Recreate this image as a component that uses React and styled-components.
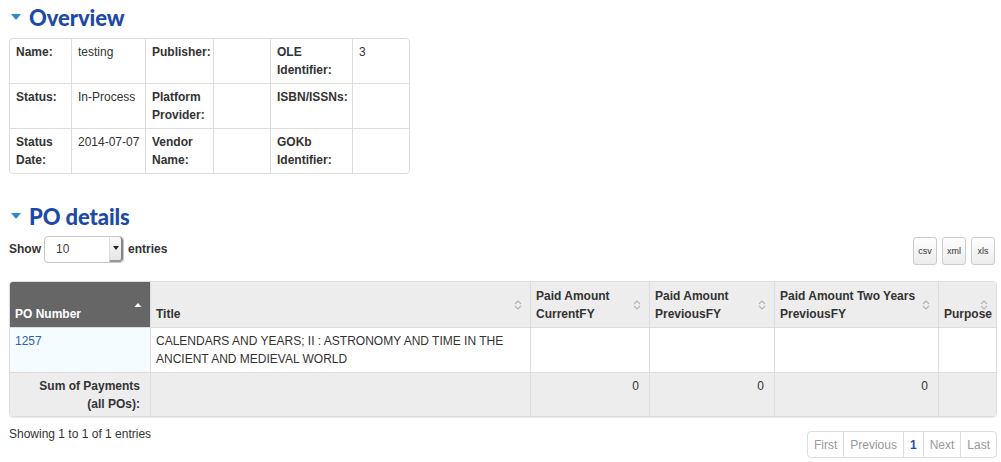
import React from 'react';
import styled, { createGlobalStyle } from 'styled-components';

const GlobalStyle = createGlobalStyle`
  body {
    margin: 0;
    background: #fff;
    font-family: "Liberation Sans", Arial, sans-serif;
    font-size: 12px;
    color: #333;
  }
`

const Page = styled.div`
  padding: 0 4px 0 9px;
`

const Heading = styled.h2`
  display: flex;
  align-items: center;
  gap: 8px;
  margin: ${props => props.$first ? '0' : '25px'} 0 0;
  height: 34px;
  font-family: Lato, "Open Sans", sans-serif;
  font-weight: 900;
  font-size: 22px;
  letter-spacing: -0.1px;
  color: #1d4aa8;
`

const Caret = styled.span`
  width: 0;
  height: 0;
  margin-left: 2px;
  border-left: 5px solid transparent;
  border-right: 5px solid transparent;
  border-top: 6px solid #2b8ad2;
`

const OverviewTable = styled.table`
  margin-top: 4px;
  width: 401px;
  border-collapse: separate;
  border-spacing: 0;
  border: 1px solid #ddd;
  border-radius: 4px;
  table-layout: fixed;

  td {
    height: 44px;
    box-sizing: border-box;
    padding: 4px 2px 4px 6px;
    vertical-align: top;
    line-height: 18px;
    border-left: 1px solid #ddd;
    border-top: 1px solid #ddd;
  }

  tr:first-child td {
    border-top: none;
  }

  td:first-child {
    border-left: none;
  }
`

const Label = styled.td`
  font-weight: bold;
`

const Toolbar = styled.div`
  display: flex;
  align-items: center;
  justify-content: space-between;
  margin-top: 4px;
  height: 28px;
`

const LengthControl = styled.label`
  display: flex;
  align-items: center;
  gap: 4px;
  font-weight: bold;
  margin-top: -4px;
`

const Select = styled.div`
  height: 25px;
  width: 67px;
  margin-left: -1px;
  border: 1px solid #c6c6c6;
  border-radius: 4px;
  display: flex;
  align-items: center;
  padding-left: 11px;
  font-weight: normal;
  color: #4a3a34;
  font-size: 12px;
  background: #fff;
`

const SelectArrow = styled.span`
  margin-left: auto;
  width: 14px;
  height: 25px;
  border-left: 1px solid #ddd;
  border-right: 2px solid #888;
  border-bottom: 2px solid #999;
  border-radius: 0 4px 4px 0;
  box-sizing: border-box;
  background: linear-gradient(#fafafa, #e6e6e6);
  display: flex;
  align-items: center;
  justify-content: center;

  &::after {
    content: '';
    border-left: 3px solid transparent;
    border-right: 3px solid transparent;
    border-top: 4px solid #222;
  }
`

const ExportButtons = styled.div`
  display: flex;
  gap: 5px;
  margin-right: 2px;
`

const ExportButton = styled.button`
  height: 28px;
  padding: 0 4px;
  min-width: 24px;
  font-family: "Liberation Sans", Arial, sans-serif;
  font-size: 9px;
  color: #333;
  border: 1px solid #ccc;
  border-radius: 3px;
  background: linear-gradient(#fff, #ececec);
`

const DataTable = styled.table`
  margin-top: 16px;
  width: 988px;
  border-collapse: separate;
  border-spacing: 0;
  border: 1px solid #ddd;
  border-radius: 4px;
  table-layout: fixed;
  box-shadow: 0 1px 1px rgba(0, 0, 0, 0.08);

  th, td {
    line-height: 18px;
    border-left: 1px solid #ddd;
    border-top: 1px solid #ddd;
  }

  tr:first-child th {
    border-top: none;
  }

  th:first-child, td:first-child {
    border-left: none;
  }
`

const HeadCell = styled.th`
  position: relative;
  padding: 5px 22px 4px 5px;
  text-align: left;
  vertical-align: bottom;
  font-weight: bold;
  background: ${props => props.$sorted ? '#666' : '#ededed'};
  color: ${props => props.$sorted ? '#fff' : '#333'};
  ${props => props.$sorted && 'border-top-left-radius: 3px;'}
  ${props => props.$tight && 'padding-right: 4px;'}
`

const SortIcon = styled.svg`
  position: absolute;
  right: 8px;
  top: 50%;
  margin-top: -5px;
`

const BodyCell = styled.td`
  padding: 4px 5px;
  vertical-align: top;
  background: ${props => props.$sorted ? '#f4fcff' : '#fff'};
`

const PoLink = styled.a`
  color: #2c63b8;
  text-decoration: none;
`

const SumCell = styled.td`
  padding: 4px 10px 3px 5px;
  vertical-align: top;
  text-align: right;
  background: #ededed;
  font-weight: ${props => props.$label ? 'bold' : 'normal'};
`

const TableFooter = styled.div`
  display: flex;
  justify-content: space-between;
  align-items: flex-start;
  margin-top: 8px;
`

const Info = styled.div`
  line-height: 18px;
`

const Pagination = styled.ul`
  display: flex;
  list-style: none;
  margin: 6px 0 0;
  padding: 0;
  border: 1px solid #ddd;
  border-radius: 4px;
  height: 25px;
`

const PageItem = styled.li`
  display: flex;
  align-items: center;
  padding: 0 6px;
  color: ${props => props.$current ? '#1d4fb0' : '#999'};
  font-weight: ${props => props.$current ? 'bold' : 'normal'};

  & + & {
    border-left: 1px solid #ddd;
  }
`

function SortArrows ({ color }) {
  return (
    <SortIcon width="8" height="10" viewBox="0 0 8 10">
      <path d="M1 4 L4 1 L7 4" fill="none" stroke={color} strokeWidth="1.1" />
      <path d="M1 6 L4 9 L7 6" fill="none" stroke={color} strokeWidth="1.1" />
    </SortIcon>
  )
}

function SortedUp () {
  return (
    <SortIcon width="8" height="10" viewBox="0 0 8 10">
      <path d="M0.5 7 L4 3 L7.5 7 Z" fill="#fff" />
    </SortIcon>
  )
}

const overview = [
  [['Name:', 'testing'], ['Publisher:', ''], ['OLE Identifier:', '3']],
  [['Status:', 'In-Process'], ['Platform Provider:', ''], ['ISBN/ISSNs:', '']],
  [['Status Date:', '2014-07-07'], ['Vendor Name:', ''], ['GOKb Identifier:', '']],
]

const columns = [
  { title: 'Title' },
  { title: <>Paid Amount<br />CurrentFY</> },
  { title: <>Paid Amount<br />PreviousFY</> },
  { title: <>Paid Amount Two Years<br />PreviousFY</> },
  { title: 'Purpose', tight: true },
]

export default function App () {
  return (
    <Page>
      <GlobalStyle />
      <Heading $first><Caret />Overview</Heading>
      <OverviewTable>
        <colgroup>
          <col style={{ width: 61 }} />
          <col style={{ width: 74 }} />
          <col style={{ width: 68 }} />
          <col style={{ width: 57 }} />
          <col style={{ width: 82 }} />
          <col style={{ width: 57 }} />
        </colgroup>
        <tbody>
          {overview.map((row, i) => (
            <tr key={i}>
              {row.map(([label, value]) => (
                <React.Fragment key={label}>
                  <Label>{label}</Label>
                  <td>{value}</td>
                </React.Fragment>
              ))}
            </tr>
          ))}
        </tbody>
      </OverviewTable>

      <Heading><Caret />PO details</Heading>
      <Toolbar>
        <LengthControl>
          Show
          <Select>10<SelectArrow /></Select>
          entries
        </LengthControl>
        <ExportButtons>
          <ExportButton>csv</ExportButton>
          <ExportButton>xml</ExportButton>
          <ExportButton>xls</ExportButton>
        </ExportButtons>
      </Toolbar>

      <DataTable>
        <colgroup>
          <col style={{ width: 140 }} />
          <col style={{ width: 380 }} />
          <col style={{ width: 119 }} />
          <col style={{ width: 125 }} />
          <col style={{ width: 164 }} />
          <col style={{ width: 58 }} />
        </colgroup>
        <thead>
          <tr>
            <HeadCell $sorted>PO Number<SortedUp /></HeadCell>
            {columns.map((col, i) => (
              <HeadCell key={i} $tight={col.tight}>
                {col.title}
                <SortArrows color="#b5b5b5" />
              </HeadCell>
            ))}
          </tr>
        </thead>
        <tbody>
          <tr>
            <BodyCell $sorted><PoLink href="#">1257</PoLink></BodyCell>
            <BodyCell>CALENDARS AND YEARS; II : ASTRONOMY AND TIME IN THE ANCIENT AND MEDIEVAL WORLD</BodyCell>
            <BodyCell />
            <BodyCell />
            <BodyCell />
            <BodyCell />
          </tr>
          <tr>
            <SumCell $label>Sum of Payments<br />(all POs):</SumCell>
            <SumCell />
            <SumCell>0</SumCell>
            <SumCell>0</SumCell>
            <SumCell>0</SumCell>
            <SumCell />
          </tr>
        </tbody>
      </DataTable>

      <TableFooter>
        <Info>Showing 1 to 1 of 1 entries</Info>
        <Pagination>
          <PageItem>First</PageItem>
          <PageItem>Previous</PageItem>
          <PageItem $current>1</PageItem>
          <PageItem>Next</PageItem>
          <PageItem>Last</PageItem>
        </Pagination>
      </TableFooter>
    </Page>
  )
}
